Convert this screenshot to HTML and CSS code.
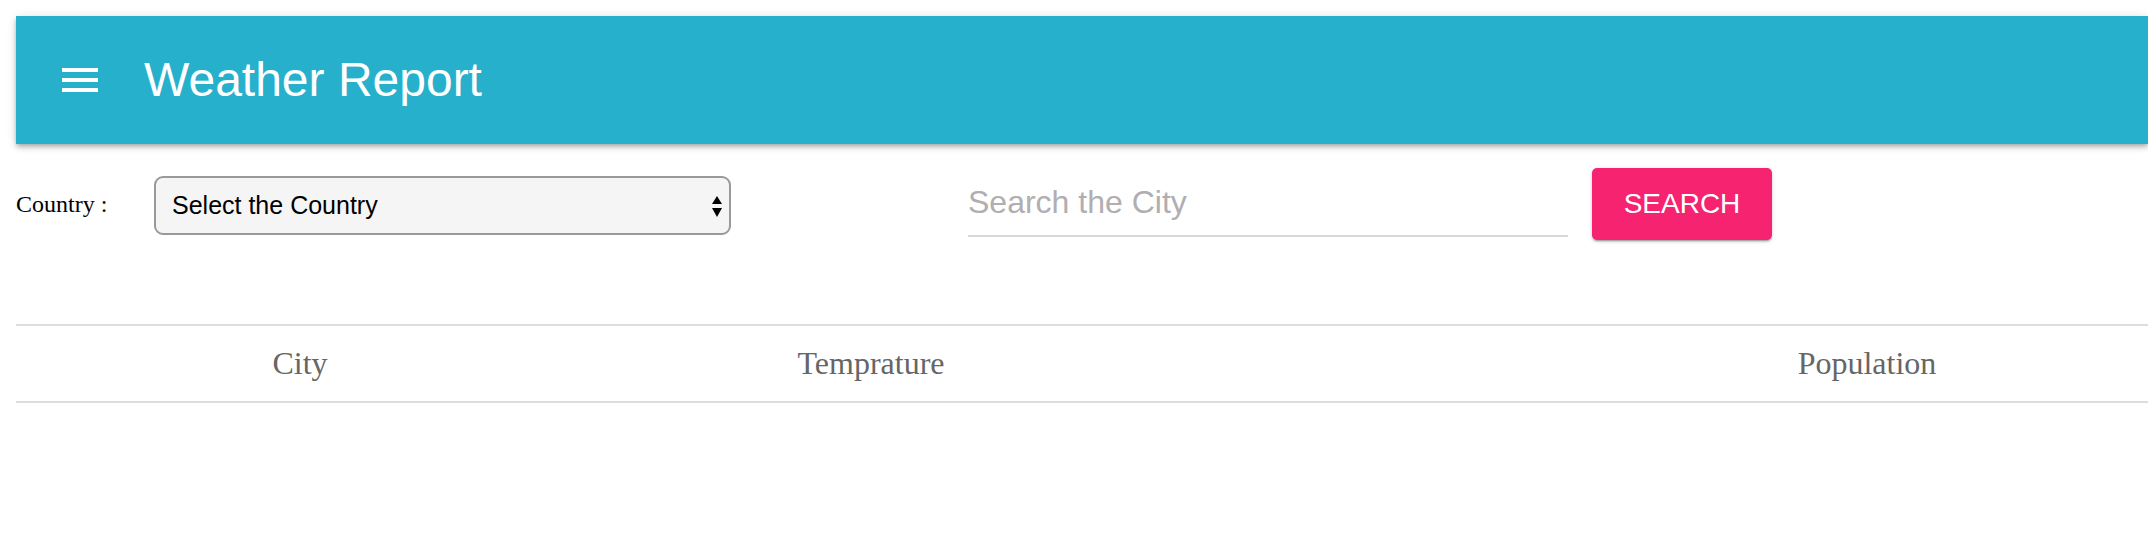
FILE: index.html
```html
<!DOCTYPE html>
<html lang="en">
<head>
<meta charset="utf-8">
<title>Weather Report</title>
<link rel="stylesheet" href="styles.css">
</head>
<body>
<div class="page">
  <header class="toolbar">
    <button class="menu-btn" type="button" aria-label="Menu">
      <svg width="48" height="48" viewBox="0 0 24 24"><path d="M3 18h18v-2H3v2zm0-5h18v-2H3v2zm0-7v2h18V6H3z" fill="#fff"/></svg>
    </button>
    <h1 class="title">Weather Report</h1>
  </header>

  <div class="controls">
    <label class="country-label" for="country">Country :</label>
    <div class="select-wrap">
      <select id="country" class="country-select">
        <option>Select the Country</option>
      </select>
      <svg class="select-arrows" width="10" height="21" viewBox="0 0 10 21"><path d="M5 0L10 8H0z M0 12h10L5 21z" fill="#000"/></svg>
    </div>
    <input class="city-input" type="text" placeholder="Search the City">
    <button class="search-btn" type="button">SEARCH</button>
  </div>

  <table class="report">
    <thead>
      <tr>
        <th class="col-city">City</th>
        <th class="col-temp">Temprature</th>
        <th class="col-pop">Population</th>
      </tr>
    </thead>
    <tbody></tbody>
  </table>
</div>
</body>
</html>
```

FILE: styles.css
```css
html, body {
  margin: 0;
  padding: 0;
  background: #fff;
  overflow: hidden;
}
body {
  font-family: "Liberation Serif", "Times New Roman", serif;
}
.page {
  padding: 16px 0 0 16px;
}
.toolbar {
  display: flex;
  align-items: center;
  height: 128px;
  padding-left: 40px;
  background: #26b0cc;
  box-shadow: 0 2px 4px -1px rgba(0,0,0,.2), 0 4px 5px 0 rgba(0,0,0,.14), 0 1px 10px 0 rgba(0,0,0,.12);
}
.menu-btn {
  width: 48px;
  height: 48px;
  padding: 0;
  border: 0;
  background: transparent;
  display: flex;
}
.title {
  margin: 0 0 0 40px;
  font-family: "Liberation Sans", Arial, Helvetica, sans-serif;
  font-weight: normal;
  font-size: 48px;
  color: #fff;
  line-height: 1;
}
.controls {
  display: flex;
  align-items: center;
  height: 72px;
  margin-top: 24px;
}
.country-label {
  width: 138px;
  font-size: 24px;
  color: #000;
}
.select-wrap {
  position: relative;
  margin-top: 3px;
}
.country-select {
  -webkit-appearance: none;
  appearance: none;
  width: 577px;
  height: 59px;
  box-sizing: border-box;
  padding: 0 40px 2px 16px;
  border: 2px solid #999;
  border-radius: 9px;
  background: #f5f5f5;
  font-family: "Liberation Sans", Arial, Helvetica, sans-serif;
  font-size: 25px;
  color: #000;
  outline: none;
}
.select-arrows {
  position: absolute;
  right: 9px;
  top: 20px;
  pointer-events: none;
}
.city-input {
  align-self: flex-start;
  width: 600px;
  height: 69px;
  box-sizing: border-box;
  margin-left: 237px;
  padding: 2px 0 0;
  border: 0;
  border-bottom: 2px solid #d9d9d9;
  background: transparent;
  font-family: "Liberation Sans", Arial, Helvetica, sans-serif;
  font-size: 32px;
  color: #333;
  outline: none;
}
.city-input::placeholder {
  color: #b0aeb0;
}
.search-btn {
  width: 180px;
  height: 72px;
  margin-left: 24px;
  padding: 0;
  border: 0;
  border-radius: 5px;
  background: #f62370;
  color: #fff;
  font-family: "Liberation Sans", Arial, Helvetica, sans-serif;
  font-size: 28px;
  font-weight: 500;
  box-shadow: 0 3px 1px -2px rgba(0,0,0,.2), 0 2px 2px 0 rgba(0,0,0,.14), 0 1px 5px 0 rgba(0,0,0,.12);
}
.report {
  margin-top: 84px;
  border-collapse: collapse;
  width: 100%;
  table-layout: fixed;
}
.report th {
  height: 75px;
  padding: 0;
  border-top: 2px solid #ddd;
  border-bottom: 2px solid #ddd;
  font-weight: normal;
  font-size: 32px;
  color: #666;
  text-align: center;
  vertical-align: middle;
}
.col-city { width: 568px; }
.col-temp { width: 574px; }
.report th.col-pop { padding-left: 428px; }
```
